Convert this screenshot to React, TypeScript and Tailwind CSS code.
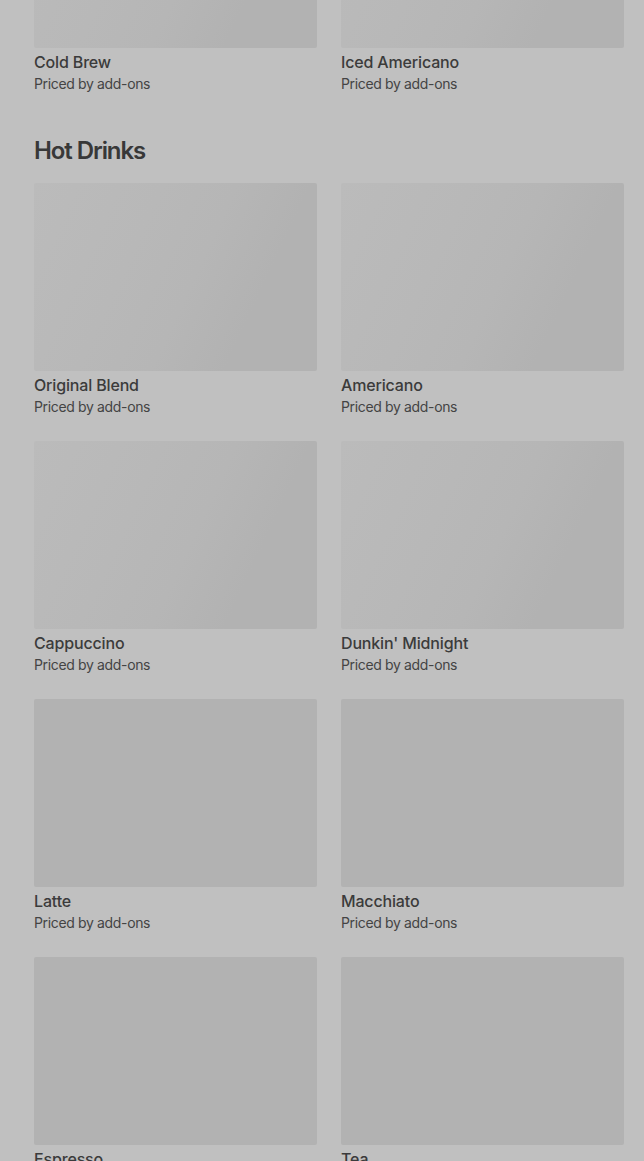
import React from 'react';

interface Item {
  name: string;
  shimmer?: boolean;
}

const iced: Item[] = [
  { name: 'Cold Brew', shimmer: true },
  { name: 'Iced Americano', shimmer: true },
];

const hot: Item[] = [
  { name: 'Original Blend', shimmer: true },
  { name: 'Americano', shimmer: true },
  { name: 'Cappuccino', shimmer: true },
  { name: "Dunkin' Midnight", shimmer: true },
  { name: 'Latte' },
  { name: 'Macchiato' },
  { name: 'Espresso' },
  { name: 'Tea' },
];

const MenuCard: React.FC<{ item: Item }> = ({ item }) => (
  <div className="flex flex-col">
    <div
      className={
        item.shimmer
          ? 'h-[188px] w-full rounded-[2px] bg-[linear-gradient(115deg,#bbbbbb_0%,#b8b8b8_35%,#b6b6b6_55%,#b2b2b2_75%,#b2b2b2_100%)]'
          : 'h-[188px] w-full rounded-[2px] bg-[#b2b2b2]'
      }
    />
    <p className="mt-1 text-[16px] leading-5 font-medium tracking-[-0.01em] text-[#3b3b3b]">
      {item.name}
    </p>
    <p className="mt-[2px] text-[14px] leading-5 tracking-[-0.025em] text-[#444444]">
      Priced by add-ons
    </p>
  </div>
);

export default function App() {
  return (
    <div className="min-h-screen overflow-hidden bg-[#c0c0c0] font-['Inter',sans-serif]">
      <div className="-mt-[140px] pl-[34px] pr-[20px]">
        {/* Iced Drinks (scrolled past) */}
        <section className="grid grid-cols-2 gap-6">
          {iced.map((item) => (
            <MenuCard key={item.name} item={item} />
          ))}
        </section>

        {/* Hot Drinks */}
        <section className="mt-[41px]">
          <h2 className="mb-4 text-[24px] leading-8 font-semibold tracking-[-0.045em] text-[#383838]">
            Hot Drinks
          </h2>
          <div className="grid grid-cols-2 gap-6">
            {hot.map((item) => (
              <MenuCard key={item.name} item={item} />
            ))}
          </div>
        </section>
      </div>
    </div>
  );
}
